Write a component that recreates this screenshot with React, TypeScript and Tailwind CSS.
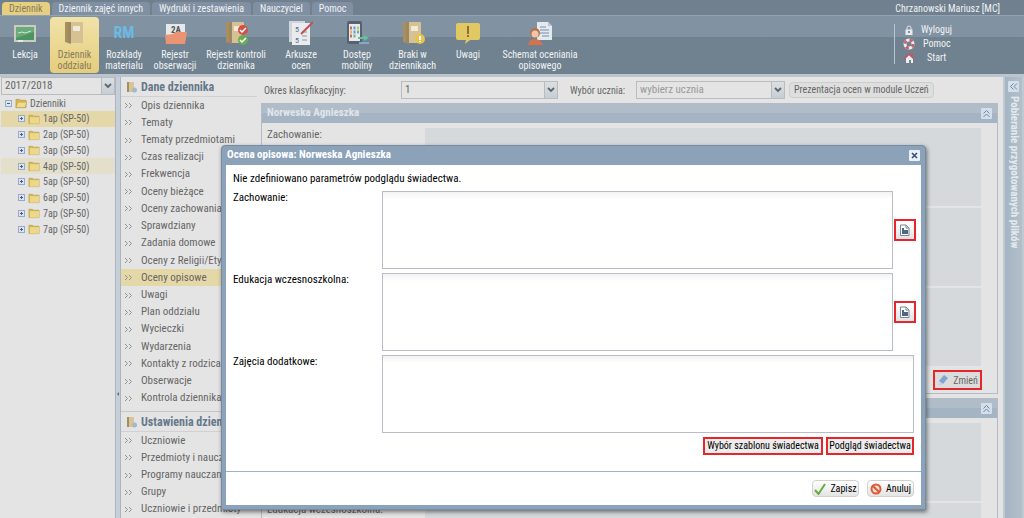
import type { ReactNode } from 'react';
import { clsx } from 'clsx';

const tabs = ['Dziennik', 'Dziennik zajęć innych', 'Wydruki i zestawienia', 'Nauczyciel', 'Pomoc'];

const Book = ({ children }: { children?: ReactNode }) => (
  <svg viewBox="0 0 24 24" className="h-6 w-6">
    <path d="M2 1h6v22l-6-2z" fill="#a98f5e" />
    <path d="M5 1h14q1 0 1 1v19q0 1-1 1H5z" fill="#d6c192" />
    <path d="M5 1h3v21H5z" fill="#9c8862" />
    <path d="M10 5h7v5h-7z" fill="#f1ead9" />
    {children}
  </svg>
);

const tools = [
  {
    label: 'Lekcja',
    width: 'w-[50px]',
    icon: (
      <svg viewBox="0 0 24 24" className="h-6 w-6">
        <rect x="1" y="4" width="22" height="17" fill="#c9cdbf" />
        <rect x="3" y="6" width="18" height="13" fill="#4c9461" />
        <path d="M3 6h18v5L3 17z" fill="#6aab7b" />
        <path d="M5 12l4-1 3 1 6-2" stroke="#d5e5d5" fill="none" />
        <path d="M5 20h5" stroke="#e8e8e8" strokeWidth="2" />
      </svg>
    ),
  },
  { label: 'Dziennik oddziału', width: 'w-[49px]', icon: <Book />, active: true },
  {
    label: 'Rozkłady materiału',
    width: 'w-[50px]',
    icon: <span className="h-6 text-[16px] leading-6 font-bold text-[#6cb9e2]">RM</span>,
  },
  {
    label: 'Rejestr obserwacji',
    width: 'w-[52px]',
    icon: (
      <svg viewBox="0 0 24 24" className="h-6 w-6">
        <path d="M3 3h19v15H3z" fill="#e6e8ea" />
        <text x="8" y="12" fontSize="9" fontWeight="bold" fill="#4d5358">2A</text>
        <path d="M2 14l8-1 2-2h12l-2 12H3z" fill="#ea9474" />
      </svg>
    ),
  },
  {
    label: 'Rejestr kontroli dziennika',
    width: 'w-[70px]',
    icon: (
      <Book>
        <circle cx="19" cy="9" r="5" fill="#d2504a" />
        <path d="M16 9l2 2 4-4" stroke="#fff" strokeWidth="1.5" fill="none" />
        <circle cx="19" cy="19" r="5" fill="#67ad52" />
        <path d="M16 19l2 2 4-4" stroke="#fff" strokeWidth="1.5" fill="none" />
      </Book>
    ),
  },
  {
    label: 'Arkusze ocen',
    width: 'w-[60px]',
    icon: (
      <svg viewBox="0 0 24 24" className="h-6 w-6">
        <path d="M0 0h16v21H0z" fill="#cfd5da" />
        <path d="M3 2h18v22H3z" fill="#e9ebed" />
        <text x="6" y="11" fontSize="8" fill="#4a6a8c">5</text>
        <text x="6" y="22" fontSize="8" fill="#4a6a8c">5</text>
        <path d="M13 11h5M13 15h5M13 19h5" stroke="#8b98a5" />
        <path d="M24 1L12 13" stroke="#c2505a" strokeWidth="2" />
      </svg>
    ),
  },
  {
    label: 'Dostęp mobilny',
    width: 'w-[52px]',
    icon: (
      <svg viewBox="0 0 24 24" className="h-6 w-6">
        <rect x="2" y="0" width="15" height="23" rx="2" fill="#566270" />
        <rect x="4" y="3" width="11" height="17" fill="#e6eaee" />
        <path d="M5 7h2M5 15h2" stroke="#d26a55" strokeWidth="3" />
        <path d="M8.500 7h2M8.500 11h2" stroke="#5c9fd0" strokeWidth="3" />
        <path d="M12 7h2M5 11h2" stroke="#d9b95c" strokeWidth="3" />
        <path d="M12 11h2M8.500 15h2" stroke="#77b477" strokeWidth="3" />
        <path d="M13 16h6v-2l5 3-5 3v-2h-6z" fill="#65c09d" />
        <path d="M24 21h-10v2h10z" fill="#7fa9cf" />
      </svg>
    ),
  },
  {
    label: 'Braki w dziennikach',
    width: 'w-[59px]',
    icon: (
      <Book>
        <circle cx="19" cy="18" r="5" fill="#e5c34c" />
        <path d="M19 15v4M19 20v1" stroke="#fff" strokeWidth="2" />
      </Book>
    ),
  },
  {
    label: 'Uwagi',
    width: 'w-[52px]',
    icon: (
      <svg viewBox="0 0 24 24" className="h-6 w-6">
        <path d="M2 2h20q2 0 2 2v13q0 2-2 2h-8l-5 4 1-4H2q-2 0-2-2V4q0-2 2-2z" fill="#e0c863" />
        <path d="M12 5v8M12 14v2" stroke="#7a4a33" strokeWidth="1.500" />
      </svg>
    ),
  },
  {
    label: 'Schemat oceniania opisowego',
    width: 'w-[92px]',
    icon: (
      <svg viewBox="0 0 24 24" className="h-6 w-6">
        <path d="M9 1h11l4 4v14H9z" fill="#e4e9ee" />
        <path d="M20 1v4h4" fill="#b9c4cf" />
        <path d="M12 6h6M12 9h9M12 12h9M14 15h7" stroke="#7390b4" />
        <circle cx="7" cy="12" r="5" fill="#b5714f" />
        <circle cx="7" cy="13" r="3.5" fill="#efc7a4" />
        <path d="M0 24q1-6 7-6t8 6z" fill="#d5714d" />
      </svg>
    ),
  },
];

const units = ['1ap', '2ap', '3ap', '4ap', '5ap', '6ap', '7ap', '7ap'];

const journalItems = [
  'Opis dziennika',
  'Tematy',
  'Tematy przedmiotami',
  'Czas realizacji',
  'Frekwencja',
  'Oceny bieżące',
  'Oceny zachowania',
  'Sprawdziany',
  'Zadania domowe',
  'Oceny z Religii/Etyki',
  'Oceny opisowe',
  'Uwagi',
  'Plan oddziału',
  'Wycieczki',
  'Wydarzenia',
  'Kontakty z rodzicami',
  'Obserwacje',
  'Kontrola dziennika',
];

const settingsItems = ['Uczniowie', 'Przedmioty i nauczyciele', 'Programy nauczania', 'Grupy', 'Uczniowie i przedmioty'];

function Combo({ label, value, className }: { label: string; value: string; className?: string }) {
  return (
    <div className={clsx('flex h-[18px] border border-[#b9bcbf] bg-[#e4e4e4]', className)}>
      <select aria-label={label} className="min-w-0 flex-1 appearance-none bg-transparent px-[3px] text-[11px] leading-4 outline-none">
        <option>{value}</option>
      </select>
      <span className="pointer-events-none flex w-[13px] items-center justify-center border-l border-[#b9bcbf] bg-linear-to-b from-[#dcdfe1] to-[#c6ced5]">
        <svg viewBox="0 0 8 6" className="h-1.5 w-2">
          <path d="M1 1l3 3 3-3" fill="none" stroke="#5d666e" strokeWidth="1.8" />
        </svg>
      </span>
    </div>
  );
}

function FolderIcon({ open }: { open?: boolean }) {
  return (
    <svg viewBox="0 0 13 12" className="h-3 w-3 shrink-0">
      <path d="M1 2h4l1 1h6v8H1z" fill="#d9b84e" stroke="#b3933b" strokeWidth=".6" />
      {open ? <path d="M3 5h10l-2 6H1z" fill="#eedb8c" stroke="#b3933b" strokeWidth=".6" /> : <path d="M2 4h10v7H2z" fill="#ecd88b" />}
    </svg>
  );
}

function Expander({ open }: { open?: boolean }) {
  return (
    <svg viewBox="0 0 7 7" className="h-[7px] w-[7px] shrink-0">
      <rect x=".5" y=".5" width="6" height="6" fill="#dfe5ee" stroke="#9aaac2" />
      <path d={open ? 'M2 3.5h3' : 'M2 3.5h3M3.5 2v3'} stroke="#445f8d" />
    </svg>
  );
}

function MenuHeader({ title }: { title: string }) {
  return (
    <h2 className="flex h-5 items-center gap-1 border-b border-[#cfd1d3] pl-1.5 text-xs font-bold whitespace-nowrap text-[#66788b]">
      <svg viewBox="0 0 10 12" className="h-3 w-2.5 shrink-0">
        <path d="M0 1h7v10H0z" fill="#d9c398" />
        <path d="M0 1h2v10H0z" fill="#a58e64" />
        <circle cx="7.5" cy="9" r="2.5" fill="#a4b8cb" />
      </svg>
      {title}
    </h2>
  );
}

function MenuList({ items, className }: { items: string[]; className: string }) {
  return (
    <ul className={clsx('flex flex-col', className)}>
      {items.map((item) => (
        <li key={item} className={clsx('flex flex-1 items-center', item === 'Oceny opisowe' && 'bg-[#e5d8a8]')}>
          <a href="#" className="flex items-center gap-[9px] pl-[3px] text-[11px] leading-4 whitespace-nowrap">
            <svg viewBox="0 0 8 5" className="h-[5px] w-2 shrink-0">
              <path d="M1 0l2.5 2.5L1 5M5 0l2.5 2.5L5 5" fill="none" stroke="#888" strokeWidth=".9" />
            </svg>
            {item}
          </a>
        </li>
      ))}
    </ul>
  );
}

function Chevrons({ side }: { side?: boolean }) {
  return (
    <svg viewBox="0 0 11 11" className="h-[11px] w-[11px] shrink-0">
      <rect width="11" height="11" rx="1" fill="#d3dfea" />
      <path
        d={side ? 'M5.5 2.5l-3 3 3 3M9 2.5l-3 3 3 3' : 'M2.5 5.5l3-3 3 3M2.5 9l3-3 3 3'}
        fill="none"
        stroke="#73859b"
      />
    </svg>
  );
}

function StudentPanel({ name }: { name: string }) {
  return (
    <section className="border border-[#b1bcc6]">
      <header className="flex h-[19px] items-center justify-between bg-linear-to-b from-[#b0bdc8] from-45% to-[#a5b4c2] to-45% px-[5px] font-bold text-[#e0e5ea]">
        {name}
        <button type="button" aria-label="Zwiń panel" className="ml-auto">
          <Chevrons />
        </button>
      </header>
      <div className="flex flex-col gap-0.5 pt-[5px] pr-4 pl-[5px]">
        {['Zachowanie:', 'Edukacja wczesnoszkolna:', 'Zajęcia dodatkowe:'].map((label) => (
          <div key={label} className="flex">
            <span className="w-[158px] shrink-0 leading-[14px]">{label}</span>
            <div className="h-[78px] flex-1 bg-[#d5d9dc]" />
          </div>
        ))}
      </div>
      <div className="flex justify-end pt-1 pr-[15px] pb-[3px]">
        <button type="button" className="flex h-5 w-[49px] items-center justify-center gap-1 border-2 border-[#e5262b] bg-[#dcdcdc] text-[10px]">
          <svg viewBox="0 0 12 12" className="h-3 w-3">
            <path d="M2 7l5-6 4 3-5 6z" fill="#7fa5d2" />
            <path d="M2 7l4 3-5 2z" fill="#cbd3da" />
          </svg>
          Zmień
        </button>
      </div>
    </section>
  );
}

function Field({ id, label, insert }: { id: string; label: string; insert?: boolean }) {
  return (
    <div className="flex">
      <label htmlFor={id} className="w-[149px] shrink-0 leading-[14px]">
        {label}
      </label>
      <textarea
        id={id}
        className="h-[78px] min-w-0 flex-1 resize-none border border-[#b9bec6] bg-linear-to-b from-[#f3f3f3] to-white to-10% outline-none"
      />
      {insert && (
        <button
          type="button"
          aria-label={`Wstaw tekst: ${label}`}
          className="-mr-0.5 ml-px flex h-[22px] w-[22px] items-center justify-center self-center border-2 border-[#e5262b] bg-linear-to-b from-white to-[#dfe3e7]"
        >
          <svg viewBox="0 0 10 12" className="h-3 w-2.5">
            <path d="M.5 1h5.500l3 3v7.500H.5z" fill="#fff" stroke="#7c8793" />
            <path d="M6 1v3h3" fill="none" stroke="#7c8793" />
            <path d="M2 4h2v2h4v4H2z" fill="#4e6882" />
          </svg>
        </button>
      )}
    </div>
  );
}

function OpisowaDialog() {
  return (
    <div
      role="dialog"
      aria-labelledby="dialog-title"
      className="absolute top-[145px] right-[98px] left-[221px] rounded-t border border-[#748ba3] bg-[#8ba2b9] px-1 pb-1 text-[11px] text-black shadow-[1px_2px_4px_rgba(0,0,0,0.5)]"
    >
      <header className="flex h-[19px] items-center justify-between pr-px pl-px">
        <h1 id="dialog-title" className="font-bold text-white">
          Ocena opisowa: Norweska Agnieszka
        </h1>
        <button type="button" aria-label="Zamknij">
          <svg viewBox="0 0 11 11" className="h-[11px] w-[11px]">
            <rect width="11" height="11" rx="1" fill="#e9f1fa" />
            <path d="M3 3l5 5M8 3l-5 5" stroke="#36507c" strokeWidth="1.600" />
          </svg>
        </button>
      </header>
      <form className="bg-white">
        <div className="border-b border-[#9db3c8] px-[7px] pt-1.5 pb-4">
          <p className="mb-1 leading-4">Nie zdefiniowano parametrów podglądu świadectwa.</p>
          <div className="flex flex-col gap-1">
            <Field id="zachowanie" label="Zachowanie:" insert />
            <Field id="edukacja" label="Edukacja wczesnoszkolna:" insert />
            <Field id="zajecia" label="Zajęcia dodatkowe:" />
            <div className="flex justify-end gap-[3px] text-[10px] whitespace-nowrap">
              <button type="button" className="h-[18px] w-[120px] border-2 border-[#e5262b] bg-[#ececec] leading-[14px]">
                Wybór szablonu świadectwa
              </button>
              <button type="button" className="h-[18px] w-[88px] border-2 border-[#e5262b] bg-[#ececec] leading-[14px]">
                Podgląd świadectwa
              </button>
            </div>
          </div>
        </div>
        <div className="flex justify-end gap-2 px-[7px] py-2 text-[10px]">
          <button type="submit" className="flex h-[17px] w-[47px] items-center justify-center gap-1 rounded-sm border border-[#d0d0d0] bg-linear-to-b from-white to-[#e4e4e4]">
            <svg viewBox="0 0 12 12" className="h-3 w-3">
              <path d="M1 7l3.500 4L11 1" fill="none" stroke="#64ad3c" strokeWidth="2" />
            </svg>
            Zapisz
          </button>
          <button type="button" className="flex h-[17px] w-[47px] items-center justify-center gap-1 rounded-sm border border-[#d0d0d0] bg-linear-to-b from-white to-[#e4e4e4]">
            <svg viewBox="0 0 12 12" className="h-3 w-3">
              <circle cx="6" cy="6" r="4.500" fill="#f3e0d8" stroke="#dd5a33" strokeWidth="2" />
              <path d="M3 3l6 6" stroke="#dd5a33" strokeWidth="2" />
            </svg>
            Anuluj
          </button>
        </div>
      </form>
    </div>
  );
}

function TopBar() {
  return (
    <header className="shrink-0 bg-[#71808e] text-[10px] text-[#f0f3f5]">
      <div className="flex h-[15px] items-end justify-between">
        <nav className="flex gap-0.5 pl-0.5">
          {tabs.map((tab, index) => (
            <a
              key={tab}
              href="#"
              className={clsx(
                'h-[13px] rounded-t-sm px-[7px] leading-[14px] whitespace-nowrap',
                index === 0 ? 'bg-[#e6d07f] text-[#857a5c]' : 'bg-[#8090a2]',
              )}
            >
              {tab}
            </a>
          ))}
        </nav>
        <span className="pr-6 leading-3">Chrzanowski Mariusz [MC]</span>
      </div>
      <div className="flex h-[59px] justify-between border-t border-[#94a4b3] bg-linear-to-b from-[#8192a2] from-37% to-[#70828f] to-37%">
        <div className="flex py-px">
          {tools.map((tool) => (
            <button
              key={tool.label}
              type="button"
              className={clsx(
                'flex flex-col items-center rounded-sm pt-1 text-center leading-[11px]',
                tool.width,
                tool.active && 'bg-linear-to-b from-[#f0e3a9] to-[#e5cd7c] text-[#857a5c]',
              )}
            >
              {tool.icon}
              <span className="mt-1 px-1">{tool.label}</span>
            </button>
          ))}
        </div>
        <div className="mt-2 mr-10 flex h-10 w-[90px] flex-col justify-between border-l border-[#b9c3cc] pl-2 text-[10px]">
          <a href="#" className="flex items-center gap-1.5 leading-3">
            <svg viewBox="0 0 12 12" className="h-3 w-3">
              <path d="M4 6V4q0-2 2-2t2 2v2" fill="none" stroke="#dfe5ea" />
              <path d="M2.500 5.500h7V11h-7z" fill="#e7eaed" />
              <path d="M6 7v2" stroke="#657584" strokeWidth="1.500" />
            </svg>
            Wyloguj
          </a>
          <a href="#" className="flex items-center gap-2 leading-3">
            <svg viewBox="0 0 12 12" className="h-3 w-3">
              <circle cx="6" cy="6" r="4" fill="none" stroke="#eee" strokeWidth="3" />
              <circle cx="6" cy="6" r="4" fill="none" stroke="#c9606c" strokeWidth="3" strokeDasharray="3.140 3.140" />
            </svg>
            Pomoc
          </a>
          <a href="#" className="flex items-center gap-3 leading-3">
            <svg viewBox="0 0 12 12" className="h-3 w-3">
              <path d="M3 6l3-3 4 3v5H3z" fill="#eceef0" />
              <path d="M1 7l5-5 5 5M9 1v3" fill="none" stroke="#c25560" strokeWidth="1.500" />
              <path d="M6 8h2v3H6z" fill="#758594" />
            </svg>
            Start
          </a>
        </div>
      </div>
    </header>
  );
}

export default function App() {
  return (
    <div className="relative flex h-screen flex-col overflow-hidden bg-[#e4e4e4] font-['Roboto_Condensed','Liberation_Sans',sans-serif] text-[11px] text-[#666]">
      <TopBar />
      <main className="flex min-h-0 flex-1 border-t-[3px] border-[#bac5cf]">
        <aside className="w-[115px] shrink-0 overflow-hidden pl-px">
          <Combo label="Rok szkolny" value="2017/2018" />
          <div className="flex h-4 items-center gap-[3px] pl-1 text-[10px]">
            <Expander open />
            <FolderIcon open />
            Dzienniki
          </div>
          <ul className="flex h-[126px] flex-col">
            {units.map((unit, index) => (
              <li
                key={index}
                className={clsx(
                  'flex flex-1 items-center gap-[3px] pl-[17px] text-[10px] whitespace-nowrap',
                  index === 0 && 'bg-[#e5d8a8]',
                  index === 3 && 'bg-[#e3dfcb]',
                )}
              >
                <Expander />
                <FolderIcon />
                {unit} (SP-50)
              </li>
            ))}
          </ul>
        </aside>
        <div className="flex w-1.5 shrink-0 items-center border-x border-[#a9b5c0] bg-[#c6cfd7]">
          <svg viewBox="0 0 4 6" className="mt-48 h-1.5 w-1">
            <path d="M3 1v4L1 3z" fill="#5c6a78" />
          </svg>
        </div>
        <nav className="w-[140px] shrink-0 overflow-hidden border-r-4 border-transparent">
          <MenuHeader title="Dane dziennika" />
          <MenuList items={journalItems} className="h-[310px]" />
          <div className="mt-1 border-t border-[#c3c7cb]">
            <MenuHeader title="Ustawienia dziennika" />
          </div>
          <MenuList items={settingsItems} className="h-[86px]" />
        </nav>
        <div className="flex min-w-0 flex-1 flex-col pt-1 pr-[5px]">
          <div className="mb-1 flex shrink-0 items-center pl-[3px] text-[10px]">
            <span className="w-[137px] shrink-0">Okres klasyfikacyjny:</span>
            <Combo label="Okres klasyfikacyjny" value="1" className="w-[157px]" />
            <span className="w-[78px] pl-3">Wybór ucznia:</span>
            <Combo label="Wybór ucznia" value="wybierz ucznia" className="w-[149px] text-[#999]" />
            <button type="button" className="ml-1 h-4 rounded-sm border border-[#cdcdcd] bg-[#dedede] px-1 leading-3 whitespace-nowrap">
              Prezentacja ocen w module Uczeń
            </button>
          </div>
          <div className="flex flex-col gap-1">
            <StudentPanel name="Norweska Agnieszka" />
            <StudentPanel name="" />
          </div>
        </div>
        <aside className="flex w-[21px] shrink-0 flex-col items-center gap-1 border-x-2 border-[#bec9d2] bg-linear-to-r from-[#a6b5c3] to-[#b2bfcb] pt-1">
          <button type="button" aria-label="Rozwiń panel">
            <Chevrons side />
          </button>
          <span className="leading-3 font-bold whitespace-nowrap text-[#e5eaef] [writing-mode:vertical-rl]">
            Pobieranie przygotowanych plików
          </span>
        </aside>
      </main>
      <OpisowaDialog />
    </div>
  );
}
